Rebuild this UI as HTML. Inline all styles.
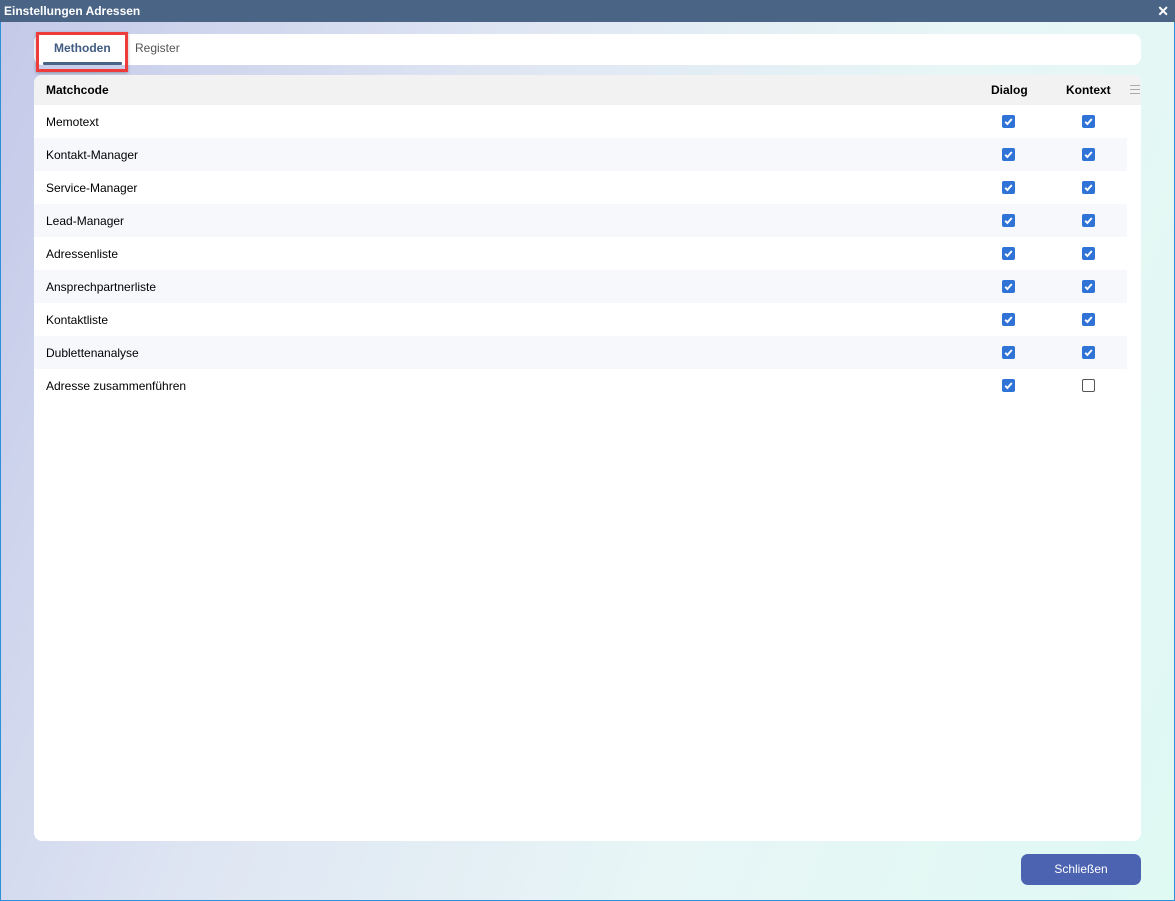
<!DOCTYPE html>
<html><head><style>
*{box-sizing:border-box;margin:0;padding:0}
body{width:1175px;height:901px;overflow:hidden;font-family:"Liberation Sans",Arial,sans-serif;font-size:12px;color:#000}
.win{position:absolute;left:0;top:0;width:1175px;height:901px;border:1px solid #2f8fd8;border-top:none;background:linear-gradient(110deg,#c3c9e8 0%,#dfe6f3 35%,#e8f6f6 65%,#dff9f3 100%)}
.title{position:absolute;left:-1px;top:0;width:1175px;height:22px;background:#4a6485;color:#fff;font-weight:bold;font-size:12px;line-height:22px;padding-left:4px}
.x{position:absolute;right:6px;top:0;font-size:14px;font-weight:bold}
.tabs{position:absolute;left:33px;top:34px;width:1107px;height:31px;background:#fff;border-radius:8px}
.t1{position:absolute;left:20px;top:7px;font-weight:bold;color:#3f5c82}
.ul{position:absolute;left:9px;top:28px;width:79px;height:3px;background:#4a6485;border-radius:1px}
.t2{position:absolute;left:101px;top:7px;color:#555}
.hl{position:absolute;left:35px;top:32px;width:92px;height:40px;border:3px solid #ee3b3b;box-shadow:0 1px 3px rgba(0,0,0,.3)}
.panel{position:absolute;left:33px;top:75px;width:1107px;height:766px;background:#fff;border-radius:8px;overflow:hidden}
.hd{height:30px;background:#f2f2f2;font-weight:bold;position:relative;line-height:30px}
.row{height:33px;position:relative;line-height:34px;width:1093px}
.c0{position:absolute;left:12px}
.cb{position:absolute;top:10px;width:13px;height:13px;border-radius:2px;background:#2f73d6}
.cb svg{position:absolute;left:1px;top:1px}
.cb.off{background:#fff;border:1px solid #555}
.d{left:968px}.k{left:1048px}
.menu{position:absolute;left:1096px;top:10px;width:10px}
.menu i{display:block;height:1px;background:#aaa;margin-bottom:3px}
.btn{position:absolute;left:1020px;top:854px;width:120px;height:31px;background:#4b63b1;border-radius:7px;color:#fff;text-align:center;line-height:31px;font-size:12px}
#rows .row:nth-child(odd){background:#fff}#rows .row:nth-child(even){background:#f7f8fc}
</style></head><body>
<div class="win">
<div class="title">Einstellungen Adressen<span class="x">✕</span></div>
<div class="tabs"><span class="t1">Methoden</span><div class="ul"></div><span class="t2">Register</span></div>
<div class="hl"></div>
<div class="panel">
<div class="hd"><span class="c0">Matchcode</span><span style="position:absolute;left:957px">Dialog</span><span style="position:absolute;left:1032px">Kontext</span><div class="menu"><i></i><i></i><i></i></div></div>
<div id="rows"></div>
</div>
<div class="btn">Schließen</div>
</div>
<script>
var n=["Memotext","Kontakt-Manager","Service-Manager","Lead-Manager","Adressenliste","Ansprechpartnerliste","Kontaktliste","Dublettenanalyse","Adresse zusammenführen"];
var ck='<svg width="11" height="11" viewBox="0 0 11 11"><path d="M2.2 5.8 L4.4 8 L8.8 3" stroke="#fff" stroke-width="1.9" fill="none"/></svg>';
var h='';n.forEach(function(t,i){h+='<div class="row"><span class="c0">'+t+'</span><span class="cb d">'+ck+'</span><span class="cb k'+(i==8?' off':'')+'">'+(i==8?'':ck)+'</span></div>'});
document.getElementById('rows').innerHTML=h;
</script>
</body></html>
